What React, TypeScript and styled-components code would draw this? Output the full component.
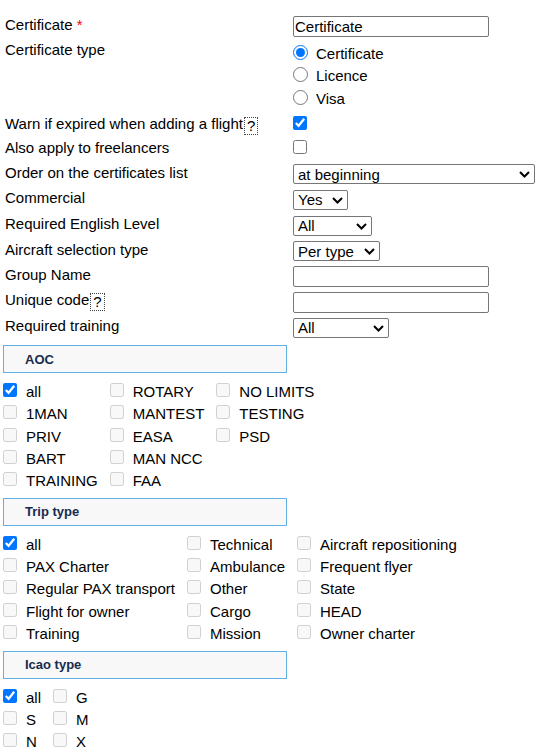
import React from 'react';
import styled, { createGlobalStyle } from 'styled-components';

const GlobalStyle = createGlobalStyle`
  body {
    margin: 0;
    background: #ffffff;
    color: #000000;
    font-family: "Liberation Sans", Arial, sans-serif;
    font-size: 15px;
  }
`;

const Page = styled.div`
  width: 554px;
  padding-top: 12px;
`;

const FormRows = styled.div`
  display: flex;
  flex-direction: column;
  margin-bottom: 6px;
`;

const Row = styled.div<{ $h: number; $top?: boolean }>`
  display: grid;
  grid-template-columns: 293px 1fr;
  align-items: ${(p) => (p.$top ? 'start' : 'center')};
  height: ${(p) => p.$h}px;
`;

const Label = styled.div<{ $pad?: number }>`
  padding-left: 5px;
  padding-top: ${(p) => p.$pad ?? 0}px;
  line-height: 20px;
  white-space: nowrap;
`;

const Required = styled.span`
  color: #ff0000;
`;

const Help = styled.span`
  display: inline-block;
  border: 1px dotted #444;
  padding: 0 2px;
  line-height: 16px;
  margin-left: 1px;
  vertical-align: middle;
`;

const Control = styled.div<{ $nudge?: boolean }>`
  display: flex;
  align-items: center;
  padding-top: ${(p) => (p.$nudge ? 3 : 0)}px;
`;

const TextInput = styled.input`
  box-sizing: border-box;
  width: 196px;
  height: 21px;
  border: 1px solid #767676;
  border-radius: 2px;
  padding: 0 1px;
  font: 15px "Liberation Sans", Arial, sans-serif;
  color: #000;
  background: #fff;
`;

const RadioGroup = styled.div`
  padding-top: 5px;
  display: flex;
  flex-direction: column;
`;

const RadioLine = styled.label`
  display: flex;
  align-items: center;
  height: 22.5px;
`;

const Radio = styled.input`
  width: 15px;
  height: 15px;
  margin: 0 0 2px 0;
  accent-color: #0075ff;
`;

const RadioText = styled.span`
  margin-left: 8px;
`;

const Check = styled.input<{ $lead?: number }>`
  width: 14px;
  height: 14px;
  margin: 0 0 3px ${(p) => p.$lead ?? 0}px;
  accent-color: #0075ff;
`;

const SelectWrap = styled.div<{ $w: number }>`
  position: relative;
  width: ${(p) => p.$w}px;
  height: 20px;
`;

const Select = styled.select`
  appearance: none;
  box-sizing: border-box;
  width: 100%;
  height: 20px;
  border: 1px solid #767676;
  border-radius: 2px;
  padding: 0 0 0 4px;
  background: #fff;
  color: #000;
  font: 15px "Liberation Sans", Arial, sans-serif;
`;

const Chevron = styled.svg`
  position: absolute;
  right: 5px;
  top: 7px;
  pointer-events: none;
`;

const SectionHead = styled.div`
  box-sizing: border-box;
  width: 284px;
  height: 28px;
  margin-left: 3px;
  padding-left: 21px;
  display: flex;
  align-items: center;
  border: 1px solid #63b0e3;
  background: #f8f8f8;
  color: #172b4d;
  font-size: 13px;
  font-weight: bold;
`;

const CheckGrid = styled.div<{ $cols: number }>`
  display: grid;
  grid-template-columns: repeat(${(p) => p.$cols}, auto);
  grid-auto-rows: 22.25px;
  justify-content: start;
  column-gap: 9px;
  margin: 7.5px 0 6px;
`;

const CheckItem = styled.label`
  display: flex;
  align-items: center;
  white-space: nowrap;
`;

const CheckText = styled.span`
  margin-left: 9px;
`;

const DropSelect: React.FC<{ width: number; value: string; options: string[] }> = ({
  width,
  value,
  options,
}) => (
  <SelectWrap $w={width}>
    <Select defaultValue={value}>
      {options.map((o) => (
        <option key={o}>{o}</option>
      ))}
    </Select>
    <Chevron width="11" height="7" viewBox="0 0 11 7">
      <polyline points="1,1 5.5,5.5 10,1" fill="none" stroke="#000" strokeWidth="2" />
    </Chevron>
  </SelectWrap>
);

type Cell = string | null;

const aocRows: Cell[][] = [
  ['all', 'ROTARY', 'NO LIMITS'],
  ['1MAN', 'MANTEST', 'TESTING'],
  ['PRIV', 'EASA', 'PSD'],
  ['BART', 'MAN NCC', null],
  ['TRAINING', 'FAA', null],
];

const tripRows: Cell[][] = [
  ['all', 'Technical', 'Aircraft repositioning'],
  ['PAX Charter', 'Ambulance', 'Frequent flyer'],
  ['Regular PAX transport', 'Other', 'State'],
  ['Flight for owner', 'Cargo', 'HEAD'],
  ['Training', 'Mission', 'Owner charter'],
];

const icaoRows: Cell[][] = [
  ['all', 'G'],
  ['S', 'M'],
  ['N', 'X'],
];

const CheckSection: React.FC<{ title: string; rows: Cell[][] }> = ({ title, rows }) => (
  <>
    <SectionHead>{title}</SectionHead>
    <CheckGrid $cols={rows[0].length}>
      {rows.flat().map((name, i) =>
        name === null ? (
          <div key={i} />
        ) : (
          <CheckItem key={i}>
            {i === 0 ? (
              <Check type="checkbox" defaultChecked $lead={3} />
            ) : (
              <Check type="checkbox" disabled $lead={3} />
            )}
            <CheckText>{name}</CheckText>
          </CheckItem>
        )
      )}
    </CheckGrid>
  </>
);

const App: React.FC = () => {
  return (
    <Page>
      <GlobalStyle />
      <FormRows>
        <Row $h={25}>
          <Label>
            Certificate <Required>*</Required>
          </Label>
          <Control $nudge>
            <TextInput defaultValue="Certificate" />
          </Control>
        </Row>
        <Row $h={75.5} $top>
          <Label $pad={3}>Certificate type</Label>
          <RadioGroup>
            <RadioLine>
              <Radio type="radio" name="kind" defaultChecked />
              <RadioText>Certificate</RadioText>
            </RadioLine>
            <RadioLine>
              <Radio type="radio" name="kind" />
              <RadioText>Licence</RadioText>
            </RadioLine>
            <RadioLine>
              <Radio type="radio" name="kind" />
              <RadioText>Visa</RadioText>
            </RadioLine>
          </RadioGroup>
        </Row>
        <Row $h={24}>
          <Label>
            Warn if expired when adding a flight<Help>?</Help>
          </Label>
          <Control>
            <Check type="checkbox" defaultChecked />
          </Control>
        </Row>
        <Row $h={23.5}>
          <Label>Also apply to freelancers</Label>
          <Control>
            <Check type="checkbox" />
          </Control>
        </Row>
        <Row $h={25}>
          <Label>Order on the certificates list</Label>
          <Control $nudge>
            <DropSelect width={242} value="at beginning" options={['at beginning', 'at end']} />
          </Control>
        </Row>
        <Row $h={26}>
          <Label>Commercial</Label>
          <Control $nudge>
            <DropSelect width={55} value="Yes" options={['Yes', 'No']} />
          </Control>
        </Row>
        <Row $h={26}>
          <Label>Required English Level</Label>
          <Control $nudge>
            <DropSelect width={79} value="All" options={['All', '4', '5', '6']} />
          </Control>
        </Row>
        <Row $h={25}>
          <Label>Aircraft selection type</Label>
          <Control $nudge>
            <DropSelect width={87} value="Per type" options={['Per type', 'Per aircraft']} />
          </Control>
        </Row>
        <Row $h={26}>
          <Label>Group Name</Label>
          <Control $nudge>
            <TextInput />
          </Control>
        </Row>
        <Row $h={25}>
          <Label>
            Unique code<Help>?</Help>
          </Label>
          <Control $nudge>
            <TextInput />
          </Control>
        </Row>
        <Row $h={26}>
          <Label>Required training</Label>
          <Control $nudge>
            <DropSelect width={96} value="All" options={['All', 'None']} />
          </Control>
        </Row>
      </FormRows>
      <CheckSection title="AOC" rows={aocRows} />
      <CheckSection title="Trip type" rows={tripRows} />
      <CheckSection title="Icao type" rows={icaoRows} />
    </Page>
  );
};

export default App;
